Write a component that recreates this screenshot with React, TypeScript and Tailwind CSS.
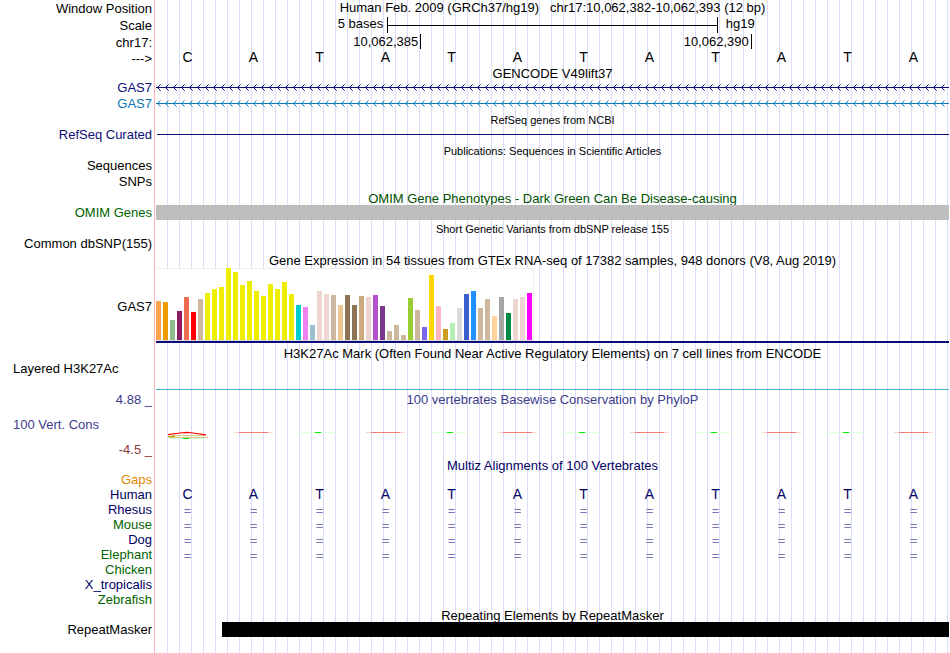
import type { ReactNode } from "react";

const BASES = ["C", "A", "T", "A", "T", "A", "T", "A", "T", "A", "T", "A"];

const SPECIES = [
  { name: "Rhesus", color: "text-[#000064]", aligned: true },
  { name: "Mouse", color: "text-[#006400]", aligned: true },
  { name: "Dog", color: "text-[#000064]", aligned: true },
  { name: "Elephant", color: "text-[#006400]", aligned: true },
  { name: "Chicken", color: "text-[#006400]", aligned: false },
  { name: "X_tropicalis", color: "text-[#000064]", aligned: false },
  { name: "Zebrafish", color: "text-[#006400]", aligned: false },
];

// [height in px, colour], one entry per tissue
const TISSUES: [number, string][] = [
  [39, "#ffa54f"],
  [38, "#ee9a00"],
  [20, "#8fbc8f"],
  [29, "#8b1c62"],
  [43, "#ee6a50"],
  [28, "#ff0000"],
  [41, "#cdb79e"],
  [47, "#eeee00"],
  [51, "#eeee00"],
  [53, "#eeee00"],
  [72, "#eeee00"],
  [68, "#eeee00"],
  [55, "#eeee00"],
  [59, "#eeee00"],
  [49, "#eeee00"],
  [44, "#eeee00"],
  [56, "#eeee00"],
  [51, "#eeee00"],
  [58, "#eeee00"],
  [46, "#eeee00"],
  [35, "#00cdcd"],
  [33, "#ee82ee"],
  [15, "#9ac0cd"],
  [49, "#eed5d2"],
  [46, "#eed5d2"],
  [45, "#cdb79e"],
  [35, "#eec591"],
  [45, "#8b7355"],
  [35, "#8b7355"],
  [44, "#cdaa7d"],
  [43, "#eed5d2"],
  [45, "#b452cd"],
  [34, "#7a378b"],
  [9, "#cdb79e"],
  [15, "#cdb79e"],
  [5, "#cdb79e"],
  [42, "#9acd32"],
  [30, "#cdb79e"],
  [13, "#7a67ee"],
  [65, "#ffd700"],
  [34, "#ffb6c1"],
  [11, "#cd9b1d"],
  [17, "#b4eeb4"],
  [32, "#d9d9d9"],
  [46, "#3a5fcd"],
  [49, "#1e90ff"],
  [32, "#cdb79e"],
  [41, "#cdb79e"],
  [24, "#ffd39b"],
  [43, "#a6a6a6"],
  [27, "#008b45"],
  [41, "#eed5d2"],
  [43, "#eed5d2"],
  [47, "#ff00ff"],
];

const RIGHT_TOP = "items-start justify-end pr-0.5";
const RIGHT_MIDDLE = "items-center justify-end pr-0.5";
const LEFT = "items-start pl-[13px]";

type RowProps = {
  label?: string;
  height?: string;
  color?: string;
  align?: string;
  children?: ReactNode;
};

function Row({ label, height = "h-4", color = "text-black", align = RIGHT_TOP, children }: RowProps) {
  return (
    <div className={`flex ${height} ${color}`}>
      <div className={`flex w-[155px] shrink-0 border-r border-[#ffb4b4] ${align}`}>{label}</div>
      <div className="ml-px min-w-0 flex-1 bg-[repeating-linear-gradient(to_right,transparent_0px,transparent_11px,#dcdcf8_11px,#dcdcf8_12px)]">
        {children}
      </div>
    </div>
  );
}

function Title({ className = "", children }: { className?: string; children: ReactNode }) {
  return (
    <h2 className={`flex h-full items-center justify-center whitespace-pre ${className}`}>
      {children}
    </h2>
  );
}

function Letters({ letters, size = "text-sm" }: { letters: string[]; size?: string }) {
  return (
    <div className={`grid grid-cols-12 pr-px text-center leading-[15px] ${size}`}>
      {letters.map((letter, i) => (
        <span key={i} className="pr-[3px]">
          {letter}
        </span>
      ))}
    </div>
  );
}

function GeneLine({ id, color }: { id: string; color: string }) {
  return (
    <svg className="block h-full w-full" shapeRendering="crispEdges" aria-hidden="true">
      <defs>
        <pattern id={id} width="8" height="16" patternUnits="userSpaceOnUse">
          <path d="M2 6h1v1h-1z M2 8h1v1h-1z M3 5h1v1h-1z M3 9h1v1h-1z" fill={color} />
          <path d="M4 4h1v1h-1z M4 10h1v1h-1z" fill={color} opacity="0.5" />
        </pattern>
      </defs>
      <rect width="100%" height="16" fill={`url(#${id})`} />
      <rect y="7" width="100%" height="1" fill={color} />
    </svg>
  );
}

function ConservationGlyph({ base }: { base: string }) {
  return (
    <svg viewBox="-2 0 44 10" className="h-[10px] w-[44px]" aria-hidden="true">
      {base === "C" && (
        <>
          <path d="M1 7.5 H40 M4 5.5 H38" stroke="#c8be64" strokeWidth="0.8" />
          <path d="M0 6.5 H7" stroke="#b4a000" strokeWidth="1.2" />
          <path d="M0 4.7 L12 3 L19 2.4 L25 3 L38 4.8" fill="none" stroke="#ff0000" strokeWidth="1.2" />
          <path d="M1 8.5 H36" stroke="#d2ffd2" />
          <path d="M15 8.5 H21" stroke="#00f000" />
        </>
      )}
      {base === "A" && (
        <>
          <rect x="0" y="2" width="39" height="1" fill="#ffd2d2" />
          <rect x="5" y="2" width="29" height="1" fill="#ff7878" />
        </>
      )}
      {base === "T" && (
        <>
          <rect x="-1" y="2" width="37" height="1" fill="#dcffdc" />
          <rect x="15" y="2" width="6" height="1" fill="#00f000" />
        </>
      )}
    </svg>
  );
}

export default function App() {
  return (
    <main className="overflow-hidden bg-white pr-px font-['Liberation_Sans',Arial,sans-serif] text-[13px] leading-[15px]">
      <Row label="Window Position" align={RIGHT_MIDDLE}>
        <Title className="pb-0.5">
          {"Human Feb. 2009 (GRCh37/hg19)   chr17:10,062,382-10,062,393 (12 bp)"}
        </Title>
      </Row>
      <Row label="Scale" height="h-[18px]" align={RIGHT_MIDDLE}>
        <div className="flex h-full items-start whitespace-nowrap">
          <span className="w-[29.17%] pr-1 text-right">5 bases</span>
          <span className="mt-px flex h-4 w-5/12 items-center border-x border-black">
            <span className="h-px w-full bg-black" />
          </span>
          <span className="pl-2">hg19</span>
        </div>
      </Row>
      <Row label="chr17:" align={RIGHT_MIDDLE}>
        <div className="flex h-[15px] text-right">
          <span className="w-1/3 pr-0.5">10,062,385</span>
          <span className="w-5/12 border-l border-black pr-0.5">10,062,390</span>
          <span className="w-1/4 border-l border-black" />
        </div>
      </Row>
      <Row label="--->" align={RIGHT_MIDDLE}>
        <Letters letters={BASES} />
      </Row>

      <Row height="h-3.5">
        <Title>GENCODE V49lift37</Title>
      </Row>
      <Row label="GAS7" color="text-[#0c0c78]">
        <GeneLine id="gas7-main" color="#0c0c78" />
      </Row>
      <Row label="GAS7" color="text-[#0c78b4]">
        <GeneLine id="gas7-alt" color="#0c78b4" />
      </Row>

      <Row height="h-[15px]">
        <Title className="pt-0.5 text-[11px]">RefSeq genes from NCBI</Title>
      </Row>
      <Row label="RefSeq Curated" color="text-[#0c0c78]">
        <div className="ml-px h-2 border-b border-[#0c0c78]" />
      </Row>

      <Row height="h-[15px]">
        <Title className="pt-0.5 text-[11px]">Publications: Sequences in Scientific Articles</Title>
      </Row>
      <Row label="Sequences" />
      <Row label="SNPs" />

      <Row height="h-[15px]" color="text-[#005000]">
        <Title className="pt-0.5">OMIM Gene Phenotypes - Dark Green Can Be Disease-causing</Title>
      </Row>
      <Row label="OMIM Genes" height="h-[15px]" color="text-[#006400]">
        <div className="h-full bg-[#bebebe]" />
      </Row>

      <Row height="h-4">
        <Title className="pt-0.5 text-[11px]">Short Genetic Variants from dbSNP release 155</Title>
      </Row>
      <Row label="Common dbSNP(155)" />

      <Row height="h-4">
        <Title>Gene Expression in 54 tissues from GTEx RNA-seq of 17382 samples, 948 donors (V8, Aug 2019)</Title>
      </Row>
      <Row label="GAS7" height="h-[75px]" align="items-center justify-end pt-0.5 pr-0.5">
        <div className="h-full border-b-2 border-[#0c0c78]">
          <div className="flex h-[73px] w-[378px] items-end gap-0.5 border-b border-[#dcdcdc] bg-white shadow-[inset_-1px_1px_#eeeeee]">
            {TISSUES.map(([height, color], i) => (
              <div key={i} className="w-[5px] shrink-0" style={{ height, backgroundColor: color }} />
            ))}
          </div>
        </div>
      </Row>

      <Row height="h-[18px]">
        <Title className="pt-0.5">
          H3K27Ac Mark (Often Found Near Active Regulatory Elements) on 7 cell lines from ENCODE
        </Title>
      </Row>
      <Row label="Layered H3K27Ac" height="h-3.5" align={LEFT} />
      <Row height="h-[15px]">
        <div className="h-full border-b border-[#46b4c8]" />
      </Row>

      <Row label="4.88 _" height="h-[18px]" color="text-[#3c3c8c]" align={RIGHT_MIDDLE}>
        <Title>100 vertebrates Basewise Conservation by PhyloP</Title>
      </Row>
      <Row label="100 Vert. Cons" height="h-8" color="text-[#3c3c8c]" align="items-center pl-[13px]">
        <div className="grid h-full grid-cols-12 items-end pr-px">
          {BASES.map((base, i) => (
            <div key={i} className="flex justify-center pr-[3px]">
              <ConservationGlyph base={base} />
            </div>
          ))}
        </div>
      </Row>
      <Row label="-4.5 _" height="h-[18px]" color="text-[#8c3c3c]" align={RIGHT_MIDDLE} />

      <Row height="h-3.5" color="text-[#000064]">
        <Title>Multiz Alignments of 100 Vertebrates</Title>
      </Row>
      <Row label="Gaps" height="h-[15px]" color="text-[#e18700]" />
      <Row label="Human" height="h-[15px]" color="text-[#000064]">
        <Letters letters={BASES} />
      </Row>
      {SPECIES.map(({ name, color, aligned }) => (
        <Row key={name} label={name} height="h-[15px]" color={color}>
          {aligned && (
            <div className="pt-px text-[#7878b4]">
              <Letters letters={BASES.map(() => "=")} size="text-[13px]" />
            </div>
          )}
        </Row>
      ))}

      <Row height="h-[15px]">
        <Title className="pt-0.5">Repeating Elements by RepeatMasker</Title>
      </Row>
      <Row label="RepeatMasker" height="h-[15px]">
        <div className="flex h-full justify-end">
          <div className="w-11/12 bg-black" />
        </div>
      </Row>
      <Row />
    </main>
  );
}
